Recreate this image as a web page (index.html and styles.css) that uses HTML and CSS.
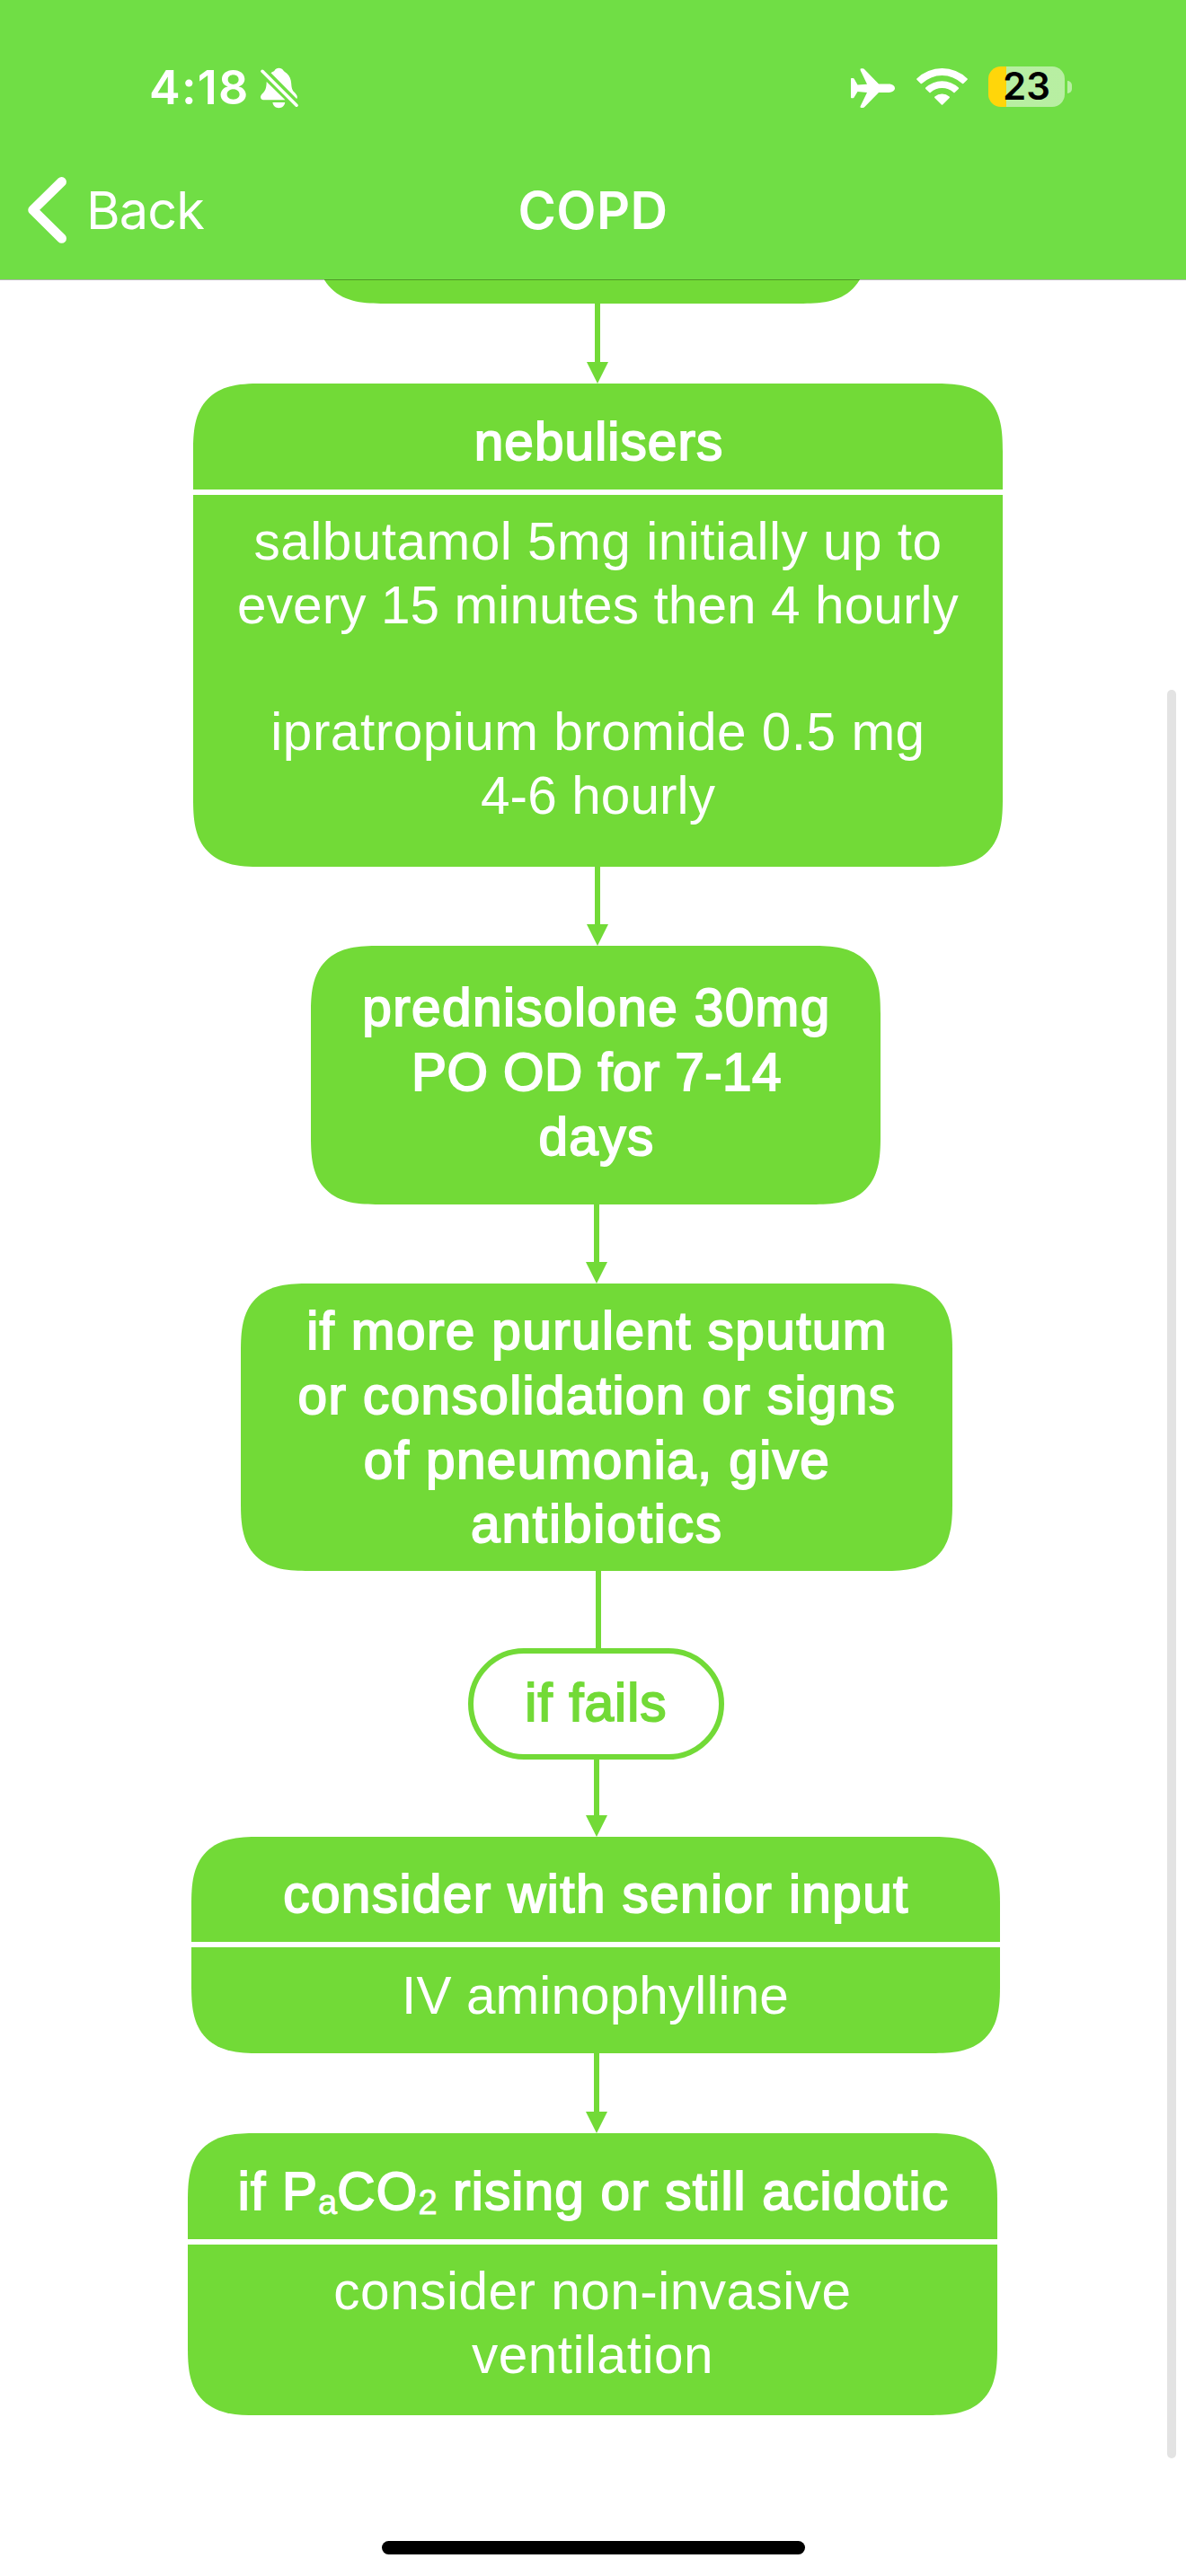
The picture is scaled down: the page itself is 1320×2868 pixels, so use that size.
FILE: index.html
```html
<!DOCTYPE html>
<html lang="en">
<head>
<meta charset="utf-8">
<title>COPD</title>
<link rel="stylesheet" href="styles.css">
</head>
<body>
<div class="screen">
  <header class="header">
    <div class="status">
      <div class="status-left">
        <span class="time">4:18</span>
        <svg class="bell" width="42" height="46" viewBox="0 0 42 46" fill="#fff">
          <path d="M11.6 6.2C13.2 5 14.8 4.6 15.6 3.6C16.6 1.7 18.3 .8 20.4 .8C22.6 .8 24.3 1.8 25.4 3.6C26.1 4.8 27.6 5.4 29 6.6C32.6 9.6 33.9 13.5 34.2 18C34.5 22.8 35.2 25.1 37.4 27.6C39.6 30 40.8 31.2 40.8 33C40.8 33.9 40.6 34.5 40.2 35Z"/>
          <path d="M6.7 16L27.4 36.2H3.2C1.2 36.2 0 34.9 0 33C0 31 1.4 29.9 3.2 27.9C6.1 24.8 6.5 21.4 6.7 16Z"/>
          <path d="M13.4 39H27.2C26.8 42.7 24 45.2 20.3 45.2C16.6 45.2 13.8 42.7 13.4 39Z"/>
          <path d="M2 4.3L40 42.2" fill="none" stroke="#fff" stroke-width="3.6" stroke-linecap="round"/>
        </svg>
      </div>
      <div class="status-right">
        <svg class="plane" width="49" height="44" viewBox="0 0 49 44" fill="#fff">
          <path d="M0 11.6Q0 11 .8 11H2.4Q3.2 11 3.7 11.8L7.5 18.6L18 17.8L10.6 2.2Q9.9 .3 11.6 .3H13.2Q14.4 .3 15.2 1.3L31 17.6H42.4C46 17.6 49 19.8 49 22.2C49 24.7 46 26.9 42.4 26.9H31L15.6 42.8Q14.5 44 13.2 44H11.6Q9.9 44 10.6 42.2L18 27L7.5 26L3.7 32.3Q3.2 33.2 2.4 33.2H.8Q0 33.2 0 32.4Z"/>
        </svg>
        <svg class="wifi" width="57" height="42" viewBox="0 0 57 42" fill="#fff">
          <path d="M.4 12.4A40.3 40.3 0 0 1 56.6 12.4Q57.3 13.1 56.6 13.8L52.3 18Q51.7 18.6 51 18A32.8 32.8 0 0 0 6 18Q5.3 18.6 4.7 18L.4 13.8Q-.3 13.1 .4 12.4Z"/>
          <path d="M10.2 22.6A26.6 26.6 0 0 1 46.8 22.6Q47.5 23.3 46.8 24L42.6 28.1Q42 28.7 41.3 28.1A18.8 18.8 0 0 0 15.7 28.1Q15 28.7 14.4 28.1L10.2 24Q9.5 23.3 10.2 22.6Z"/>
          <path d="M20.4 32.5A12.6 12.6 0 0 1 36.6 32.5Q37.4 33.2 36.7 33.9L29.2 41.4Q28.5 42 27.8 41.4L20.3 33.9Q19.6 33.2 20.4 32.5Z"/>
        </svg>
        <div class="battery"><div class="battery-cell"><span>23</span></div><i class="battery-tip"></i></div>
      </div>
    </div>
    <nav class="nav">
      <a class="back">
        <svg width="44" height="74" viewBox="0 0 44 74" fill="none" stroke="#fff" stroke-width="10.7" stroke-linecap="round" stroke-linejoin="round"><path d="M37.6 5.4L5.6 36.8L37.6 68.4"/></svg>
        <span>Back</span>
      </a>
      <h1 class="title">COPD</h1>
    </nav>
  </header>

  <main class="flow">
    <div class="node node-previous"></div>
    <svg class="arrow arrow-a" width="24" height="89" viewBox="0 0 24 89"><path d="M9 0H15V65H24L12 89L0 65H9Z"/></svg>

    <section class="node node-nebulisers">
      <h2>nebulisers</h2>
      <div class="detail">
        <span class="line loose">salbutamol 5mg initially up to</span>
        <span class="line">every 15 minutes then 4 hourly</span>
        <span class="line"><br></span>
        <span class="line loose">ipratropium bromide 0.5 mg</span>
        <span class="line">4-6 hourly</span>
      </div>
    </section>
    <svg class="arrow arrow-a" width="24" height="88" viewBox="0 0 24 88"><path d="M9 0H15V64H24L12 88L0 64H9Z"/></svg>

    <section class="node node-prednisolone">
      <h2><span class="line">prednisolone 30mg</span><span class="line dense">PO OD for 7-14</span><span class="line">days</span></h2>
    </section>
    <svg class="arrow arrow-b" width="24" height="88" viewBox="0 0 24 88"><path d="M9 0H15V64H24L12 88L0 64H9Z"/></svg>

    <section class="node node-antibiotics">
      <h2><span class="line">if more purulent sputum</span><span class="line">or consolidation or signs</span><span class="line">of pneumonia, give</span><span class="line open">antibiotics</span></h2>
    </section>
    <svg class="arrow arrow-c" width="24" height="86" viewBox="0 0 24 86"><path d="M9 0H15V86H9Z"/></svg>

    <div class="pill">if fails</div>
    <svg class="arrow arrow-b" width="24" height="86" viewBox="0 0 24 86"><path d="M9 0H15V62H24L12 86L0 62H9Z"/></svg>

    <section class="node node-senior">
      <h2>consider with senior input</h2>
      <div class="detail"><span class="line">IV aminophylline</span></div>
    </section>
    <svg class="arrow arrow-b" width="24" height="89" viewBox="0 0 24 89"><path d="M9 0H15V65H24L12 89L0 65H9Z"/></svg>

    <section class="node node-ventilation">
      <h2>if P<sub>a</sub>CO<sub>2</sub> rising or still acidotic</h2>
      <div class="detail">
        <span class="line loose">consider non-invasive</span>
        <span class="line loose">ventilation</span>
      </div>
    </section>
  </main>
  <div class="scrollbar"></div>
  <div class="home-indicator"></div>
</div>
</body>
</html>
```
FILE: styles.css
```css
:root {
  --bar: #70de45;
  --green: #72da37;
}

* {
  box-sizing: border-box;
}

body {
  margin: 0;
  background: #fff;
}

.screen {
  position: relative;
  width: 1320px;
  height: 2868px;
  overflow: hidden;
  background: #fff;
  font-family: "Liberation Sans", Arial, sans-serif;
}

/* Header */
.header {
  position: relative;
  z-index: 1;
  height: 311px;
  background: var(--bar);
  box-shadow: 0 1px rgba(0, 0, 0, 0.3);
  color: #fff;
  font-family: Inter, sans-serif;
}

.status {
  display: flex;
  justify-content: space-between;
  height: 156px;
  padding: 40px 127px 0 166px;
}

.status-left,
.status-right {
  display: flex;
  align-items: center;
}

.time {
  width: 124px;
  font-size: 52px;
  font-weight: 600;
  line-height: 62px;
  letter-spacing: 1.3px;
}

.wifi {
  margin: 0 23px 4px 24px;
}

.battery {
  display: flex;
  align-items: center;
  gap: 3px;
  margin-bottom: 3px;
}

.battery-cell {
  width: 85px;
  height: 45px;
  border-radius: 14px;
  background: linear-gradient(90deg, #ffd60a 20px, rgba(255, 255, 255, 0.5) 20px);
  color: #000;
  font-size: 42px;
  font-weight: 600;
  line-height: 44px;
  text-align: center;
}

.battery-tip {
  width: 5px;
  height: 14px;
  border-radius: 0 7px 7px 0;
  background: rgba(255, 255, 255, 0.5);
}

.nav {
  display: grid;
  grid-template-columns: 1fr auto 1fr;
  align-items: center;
  height: 155px;
  padding: 0 31px;
  font-size: 57.6px;
  line-height: 70px;
}

.back {
  display: flex;
  align-items: center;
  gap: 21px;
  letter-spacing: -0.9px;
}

.title {
  margin: 0;
  font-size: inherit;
  font-weight: 600;
  letter-spacing: 0.4px;
}

/* Flowchart */
.flow {
  display: flex;
  flex-direction: column;
  align-items: flex-start;
}

.node {
  flex: none;
  overflow: hidden;
  border-radius: 60px;
  background: var(--green);
  color: #fff;
  text-align: center;
}

@supports (corner-shape: superellipse(1.485)) {
  .node {
    border-radius: 76px;
    corner-shape: superellipse(1.485);
  }
}

.node h2 {
  margin: 0;
  padding-left: 2px;
  font-size: 58.5px;
  font-weight: 400;
  line-height: 71.8px;
  letter-spacing: 1.4px;
  white-space: nowrap;
  -webkit-text-stroke: 1.9px currentColor;
}

.node sub {
  position: relative;
  top: 5px;
  font-size: 38px;
  line-height: 0;
  letter-spacing: 0;
  vertical-align: baseline;
  -webkit-text-stroke-width: 0.8px;
}

.line {
  display: block;
}

.detail {
  padding-top: 17px;
  border-top: 6px solid #fff;
  font-size: 58.5px;
  line-height: 70.67px;
  letter-spacing: 0.1px;
  white-space: nowrap;
}

.loose {
  letter-spacing: 0.5px;
}

.node .dense {
  letter-spacing: 0.4px;
}

.node .open {
  letter-spacing: 1.9px;
}

.node-previous {
  width: 614px;
  height: 180px;
  margin: -153px 0 0 352px;
}

.node-nebulisers {
  width: 901px;
  height: 538px;
  margin-left: 215px;
}

.node-nebulisers h2 {
  height: 118px;
  padding-top: 29px;
  letter-spacing: 1.1px;
}

.node-prednisolone {
  width: 634px;
  height: 288px;
  margin-left: 346px;
  padding-top: 33px;
}

.node-antibiotics {
  width: 792px;
  height: 320px;
  margin-left: 267.5px;
  padding-top: 17px;
}

.pill {
  flex: none;
  width: 285px;
  height: 124px;
  margin-left: 521px;
  padding-top: 19px;
  border: 6px solid var(--green);
  border-radius: 62px;
  color: var(--green);
  font-size: 58.5px;
  line-height: 71.8px;
  letter-spacing: 1.1px;
  text-align: center;
  -webkit-text-stroke: 1.9px currentColor;
}

.node-senior {
  width: 900px;
  height: 241px;
  margin-left: 212.5px;
}

.node-senior h2 {
  height: 117px;
  padding-top: 28px;
}

.node-senior .detail {
  padding-top: 19px;
}

.node-ventilation {
  width: 901px;
  height: 314px;
  margin-left: 209px;
}

.node-ventilation h2 {
  height: 118px;
  padding-top: 29px;
  letter-spacing: 1.2px;
}

.arrow {
  flex: none;
  display: block;
  fill: var(--green);
}

.arrow-a {
  margin-left: 652.7px;
}

.arrow-b {
  margin-left: 651.5px;
}

.arrow-c {
  margin-left: 654px;
}

/* Overlays */
.scrollbar {
  position: absolute;
  top: 768px;
  right: 11px;
  width: 10px;
  height: 1969px;
  border-radius: 5px;
  background: #e3e3e3;
}

.home-indicator {
  position: absolute;
  left: 425px;
  top: 2829px;
  width: 471px;
  height: 15px;
  border-radius: 7.5px;
  background: #000;
}
```
